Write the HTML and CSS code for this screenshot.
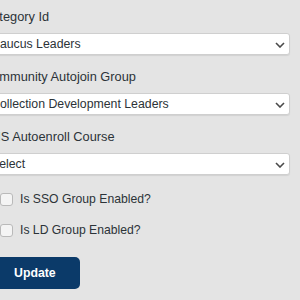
FILE: index.html
```html
<!DOCTYPE html>
<html lang="en">
<head>
  <meta charset="UTF-8">
  <meta name="viewport" content="width=device-width, initial-scale=1.0">
  <title>Group Settings</title>
  <link rel="stylesheet" href="styles.css">
</head>
<body>
  <form class="settings">
    <div class="field">
      <label for="category">Category Id</label>
      <div class="select-wrap">
        <select id="category">
          <option>Caucus Leaders</option>
        </select>
        <svg class="chevron" width="10" height="6" viewBox="0 0 10 6"><path d="M1 1l4 4 4-4" fill="none" stroke="#4a4a4a" stroke-width="1.6"/></svg>
      </div>
    </div>
    <div class="field">
      <label for="community">Community Autojoin Group</label>
      <div class="select-wrap">
        <select id="community">
          <option>Collection Development Leaders</option>
        </select>
        <svg class="chevron" width="10" height="6" viewBox="0 0 10 6"><path d="M1 1l4 4 4-4" fill="none" stroke="#4a4a4a" stroke-width="1.6"/></svg>
      </div>
    </div>
    <div class="field">
      <label for="course">LMS Autoenroll Course</label>
      <div class="select-wrap">
        <select id="course">
          <option>Select</option>
        </select>
        <svg class="chevron" width="10" height="6" viewBox="0 0 10 6"><path d="M1 1l4 4 4-4" fill="none" stroke="#4a4a4a" stroke-width="1.6"/></svg>
      </div>
    </div>
    <label class="check first"><input type="checkbox"> Is SSO Group Enabled?</label>
    <label class="check"><input type="checkbox"> Is LD Group Enabled?</label>
    <button type="button" class="update">Update</button>
  </form>
</body>
</html>
```

FILE: styles.css
```css
body {
  margin: 0;
  background: #e4e4e4;
  font-family: "Liberation Sans", Arial, sans-serif;
  color: #2c3338;
  overflow: hidden;
}
.settings {
  margin-left: -18px;
  padding: 8px 10px 0 0;
  display: flex;
  flex-direction: column;
}
.field {
  display: flex;
  flex-direction: column;
  margin-bottom: 13px;
}
.field label {
  font-size: 12.8px;
  line-height: 17px;
  padding-left: 1px;
  margin-bottom: 8px;
}
.select-wrap {
  position: relative;
}
.select-wrap select {
  appearance: none;
  -webkit-appearance: none;
  width: 100%;
  height: 22px;
  padding: 0 8px;
  border: 1px solid #cfcfcf;
  border-radius: 3px;
  background: #fff;
  box-shadow: 0 1px 1px rgba(0,0,0,0.08);
  font-family: inherit;
  font-size: 12.3px;
  color: #2c3338;
}
.chevron {
  position: absolute;
  right: 5px;
  top: 9px;
  pointer-events: none;
}
.check {
  display: flex;
  align-items: center;
  gap: 7px;
  padding-left: 18px;
  height: 20px;
  font-size: 12.2px;
}
.check.first {
  margin-top: 1px;
  margin-bottom: 11px;
}
.check input {
  appearance: none;
  -webkit-appearance: none;
  margin: 0;
  width: 13px;
  height: 13px;
  border: 1px solid #b9b9b9;
  border-radius: 3px;
  background: #f4f4f4;
}
.update {
  align-self: flex-start;
  margin-top: 17px;
  margin-left: 8px;
  height: 32px;
  padding: 0 24px;
  border: none;
  border-radius: 5px;
  background: #0b3a69;
  color: #fff;
  font-family: inherit;
  font-weight: bold;
  font-size: 12.3px;
}
```
